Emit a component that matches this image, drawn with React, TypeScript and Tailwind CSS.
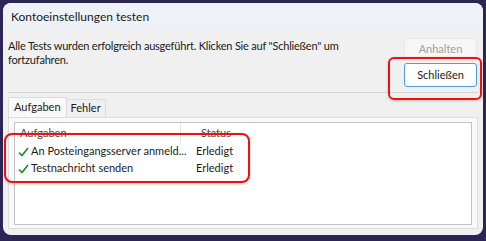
import React from 'react';

const font = { fontFamily: 'Lato, "Noto Sans", sans-serif' };

const Check = () => (
  <svg width="11" height="10" viewBox="0 0 11 10" className="shrink-0">
    <path d="M1 5.5 L4 8.5 L10 1" fill="none" stroke="#1e8a2e" strokeWidth="1.6" />
  </svg>
);

const rows = [
  { task: 'An Posteingangsserver anmeld...', status: 'Erledigt' },
  { task: 'Testnachricht senden', status: 'Erledigt' },
];

export default function App() {
  return (
    <div className="relative w-[486px] h-[241px] overflow-hidden bg-[#2b2454] pt-[3px] px-[3px]" style={font}>
      <div className="flex flex-col w-[480px] h-[232px] rounded-lg overflow-hidden bg-[#f0f0f0] text-[11px] text-[#1b1b1b]">
        {/* Title bar */}
        <div className="h-[27px] shrink-0 bg-[#eef2f7] flex items-center pl-2 text-[12px] text-[#1a1a1a]">
          Kontoeinstellungen testen
        </div>

        {/* Message + buttons */}
        <div className="flex pl-[5px] pr-[6px] pt-[8px] h-[59px]">
          <p className="flex-1 leading-[14px] pt-[1px] pr-4 tracking-[-0.2px]">
            Alle Tests wurden erfolgreich ausgeführt. Klicken Sie auf "Schließen" um fortzufahren.
          </p>
          <div className="flex flex-col gap-[2px] w-[73px]">
            <button className="h-[23px] rounded-[3px] bg-[#f6f6f6] border border-[#e8e8e8] text-[#a0a0a0]">
              Anhalten
            </button>
            <button className="h-[24px] rounded-[3px] bg-white border border-[#4d9be0] text-[#1b1b1b]">
              Schließen
            </button>
          </div>
        </div>

        <div className="mx-[5px] mt-[3px] h-px bg-[#d5d5d5]" />

        {/* Tabs */}
        <div className="flex items-end pl-[5px] mt-[4px] h-[20px]">
          <div className="h-[20px] px-[5px] flex items-center bg-[#f9f9f9] border border-b-0 border-[#dcdcdc] rounded-t-[2px]">
            Aufgaben
          </div>
          <div className="h-[18px] px-[4px] flex items-center bg-[#f0f0f0] border border-l-0 border-b-0 border-[#dcdcdc]">
            Fehler
          </div>
        </div>

        {/* Tab panel */}
        <div className="mx-[5px] h-[112px] bg-[#f9f9f9] border border-[#dcdcdc] px-[5px] pt-[4px] pb-[3px]">
          <div className="h-full bg-white border border-[#c4c4c8]">
            <div className="flex h-[20px] items-center text-[#4a4a4a]">
              <div className="w-[166px] pl-[5px] border-r border-[#e5e5e5] h-full flex items-center">Aufgaben</div>
              <div className="pl-[20px] h-full flex items-center">Status</div>
            </div>
            {rows.map((r) => (
              <div key={r.task} className="flex h-[17px] items-center">
                <div className="w-[167px] pl-[3px] flex items-center gap-[2px] whitespace-nowrap">
                  <Check />
                  <span>{r.task}</span>
                </div>
                <div className="pl-[14px]">{r.status}</div>
              </div>
            ))}
          </div>
        </div>
      </div>

      {/* Annotations */}
      <div className="absolute left-[388px] top-[57px] w-[94px] h-[43px] rounded-[6px] border-2 border-[#f01010] shadow-[0_1px_3px_rgba(0,0,0,0.2)]" />
      <div className="absolute left-[4px] top-[133px] w-[246px] h-[50px] rounded-[8px] border-2 border-[#f01010] shadow-[0_1px_3px_rgba(0,0,0,0.2)]" />
    </div>
  );
}
